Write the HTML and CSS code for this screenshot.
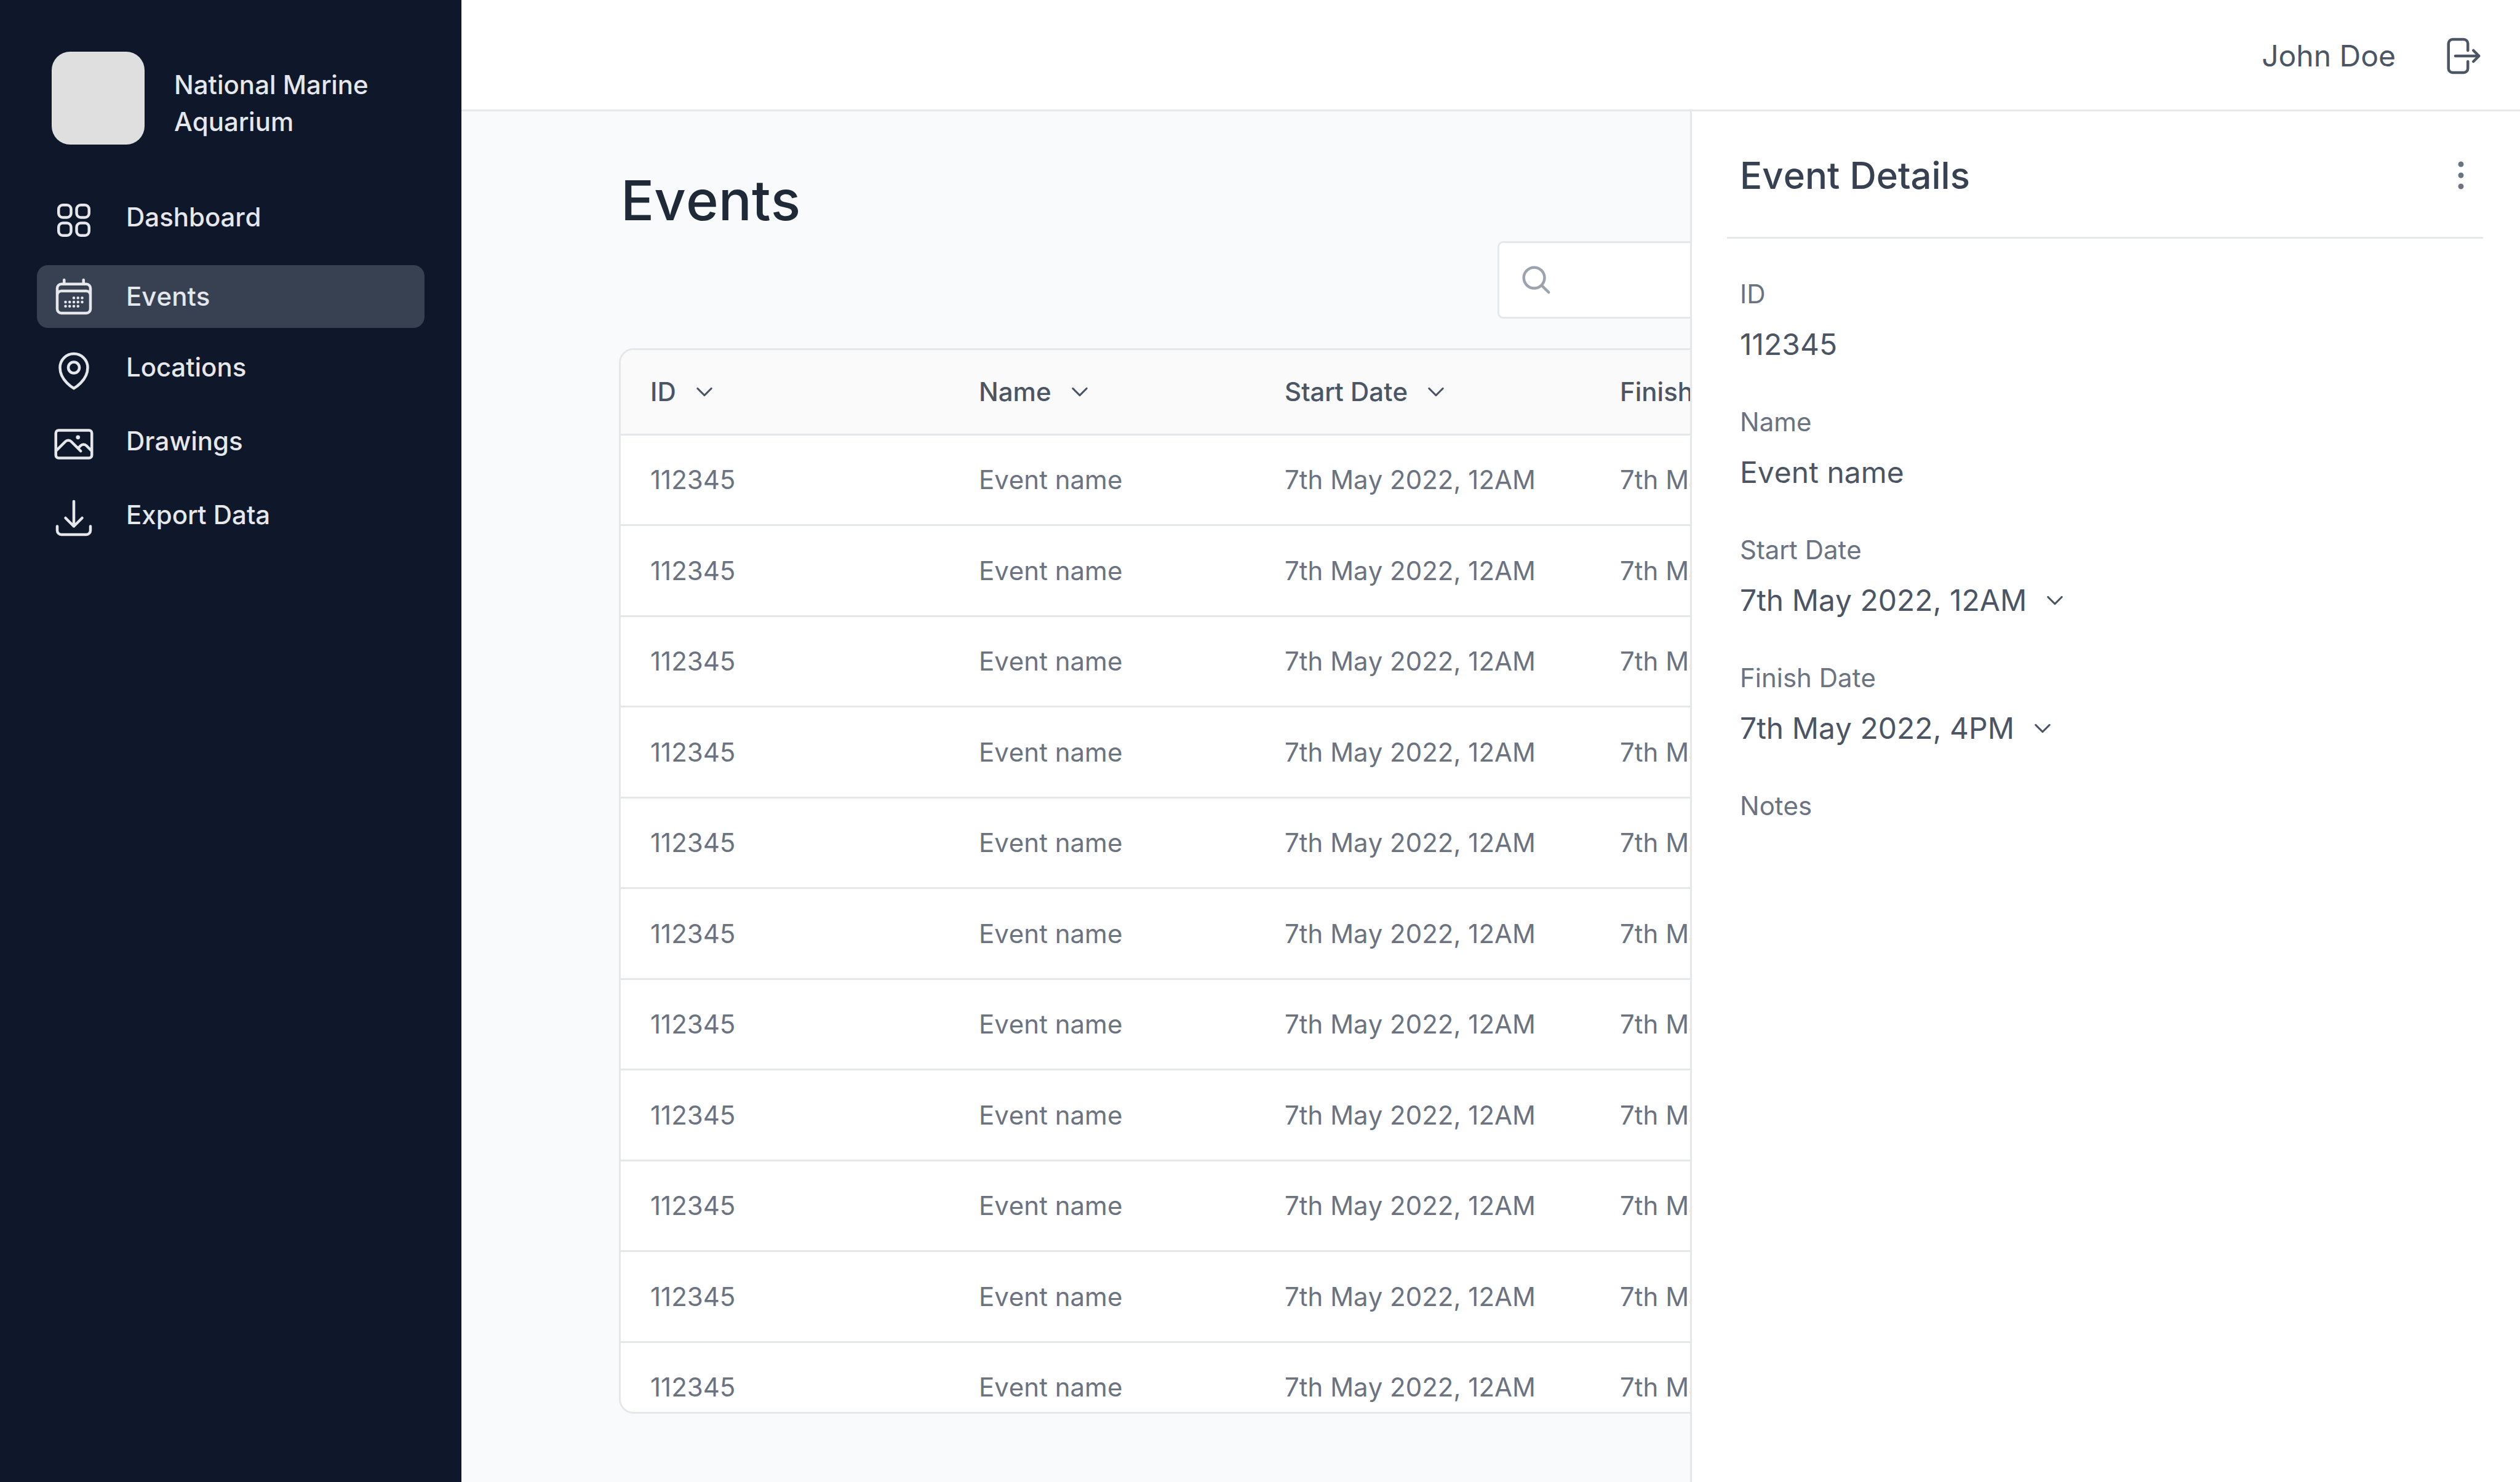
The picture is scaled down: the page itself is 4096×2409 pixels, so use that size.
FILE: index.html
```html
<!DOCTYPE html>
<html lang="en">
<head>
<meta charset="utf-8">
<title>Events – National Marine Aquarium</title>
<link rel="stylesheet" href="styles.css">
</head>
<body>
<svg class="sprite" aria-hidden="true">
  <symbol id="i-grid" viewBox="0 0 24 24"><path d="M3.75 6A2.25 2.25 0 016 3.75h2.25A2.25 2.25 0 0110.5 6v2.25a2.25 2.25 0 01-2.25 2.25H6a2.25 2.25 0 01-2.25-2.25V6zM3.75 15.75A2.25 2.25 0 016 13.5h2.25a2.25 2.25 0 012.25 2.25V18a2.25 2.25 0 01-2.25 2.25H6A2.25 2.25 0 013.75 18v-2.25zM13.5 6a2.25 2.25 0 012.25-2.25H18A2.25 2.25 0 0120.25 6v2.25A2.25 2.25 0 0118 10.5h-2.25a2.25 2.25 0 01-2.25-2.25V6zM13.5 15.75a2.25 2.25 0 012.25-2.25H18a2.25 2.25 0 012.25 2.25V18A2.25 2.25 0 0118 20.25h-2.25A2.25 2.25 0 0113.5 18v-2.25z"/></symbol>
  <symbol id="i-calendar" viewBox="0 0 24 24"><path d="M6.75 3v2.25M17.25 3v2.25M3 18.75V7.5a2.25 2.25 0 012.25-2.25h13.5A2.25 2.25 0 0121 7.5v11.25m-18 0A2.25 2.25 0 005.25 21h13.5A2.25 2.25 0 0021 18.75m-18 0v-7.5A2.25 2.25 0 015.25 9h13.5A2.25 2.25 0 0121 11.25v7.5m-9-6h.008v.008H12v-.008zM12 15h.008v.008H12V15zm0 2.25h.008v.008H12v-.008zM9.75 15h.008v.008H9.75V15zm0 2.25h.008v.008H9.75v-.008zM7.5 15h.008v.008H7.5V15zm0 2.25h.008v.008H7.5v-.008zm6.75-4.5h.008v.008h-.008v-.008zm0 2.25h.008v.008h-.008V15zm0 2.25h.008v.008h-.008v-.008zm2.25-4.5h.008v.008H16.5v-.008zm0 2.25h.008v.008H16.5V15z"/></symbol>
  <symbol id="i-pin" viewBox="0 0 24 24"><path d="M15 10.5a3 3 0 11-6 0 3 3 0 016 0z"/><path d="M19.5 10.5c0 7.142-7.5 11.25-7.5 11.25S4.5 17.642 4.5 10.5a7.5 7.5 0 1115 0z"/></symbol>
  <symbol id="i-photo" viewBox="0 0 24 24"><path d="M2.25 15.75l5.159-5.159a2.25 2.25 0 013.182 0l5.159 5.159m-1.5-1.5l1.409-1.409a2.25 2.25 0 013.182 0l2.909 2.909m-18 3.75h16.5a1.5 1.5 0 001.5-1.5V6a1.5 1.5 0 00-1.5-1.5H3.75A1.5 1.5 0 002.25 6v12a1.5 1.5 0 001.5 1.5zm10.5-11.25h.008v.008h-.008V8.25zm.375 0a.375.375 0 11-.75 0 .375.375 0 01.75 0z"/></symbol>
  <symbol id="i-download" viewBox="0 0 24 24"><path d="M3 16.5v2.25A2.25 2.25 0 005.25 21h13.5A2.25 2.25 0 0021 18.75V16.5M16.5 12L12 16.5m0 0L7.5 12m4.5 4.5V3"/></symbol>
  <symbol id="i-logout" viewBox="0 0 24 24"><path d="M15.75 9V5.25A2.25 2.25 0 0013.5 3h-6a2.25 2.25 0 00-2.25 2.25v13.5A2.25 2.25 0 007.5 21h6a2.25 2.25 0 002.25-2.25V15m3 0l3-3m0 0l-3-3m3 3H9"/></symbol>
  <symbol id="i-search" viewBox="0 0 24 24"><path d="M21 21l-5.197-5.197m0 0A7.5 7.5 0 105.196 5.196a7.5 7.5 0 0010.607 10.607z"/></symbol>
  <symbol id="i-chevron" viewBox="0 0 24 24"><path d="M19.5 8.25l-7.5 7.5-7.5-7.5"/></symbol>
  <symbol id="i-dots" viewBox="0 0 24 24"><path d="M12 6.75a.75.75 0 110-1.5.75.75 0 010 1.5zM12 12.75a.75.75 0 110-1.5.75.75 0 010 1.5zM12 18.75a.75.75 0 110-1.5.75.75 0 010 1.5z"/></symbol>
</svg>

<div class="app">
  <aside class="sidebar">
    <div class="org">
      <div class="org-logo"></div>
      <p class="org-name">National Marine Aquarium</p>
    </div>
    <nav class="nav">
      <a class="nav-item" href="#dashboard"><svg class="icon"><use href="#i-grid"/></svg><span class="nav-label">Dashboard</span></a>
      <a class="nav-item active" href="#events" aria-current="page"><svg class="icon"><use href="#i-calendar"/></svg><span class="nav-label">Events</span></a>
      <a class="nav-item" href="#locations"><svg class="icon"><use href="#i-pin"/></svg><span class="nav-label">Locations</span></a>
      <a class="nav-item" href="#drawings"><svg class="icon"><use href="#i-photo"/></svg><span class="nav-label">Drawings</span></a>
      <a class="nav-item" href="#export"><svg class="icon"><use href="#i-download"/></svg><span class="nav-label">Export Data</span></a>
    </nav>
  </aside>

  <div class="page">
    <header class="topbar">
      <span class="user">John Doe</span>
      <button class="icon-button" type="button" aria-label="Log out"><svg class="icon"><use href="#i-logout"/></svg></button>
    </header>

    <div class="body">
      <main class="content">
        <h1 class="title">Events</h1>
        <label class="search">
          <svg class="icon search-icon"><use href="#i-search"/></svg>
          <input class="search-input" type="search" aria-label="Search events">
        </label>
        <div class="table-wrap">
          <table class="table">
            <colgroup><col class="col-id"><col class="col-name"><col class="col-start"><col class="col-finish"></colgroup>
            <thead>
              <tr>
                <th><button class="sort" type="button">ID<svg class="chevron"><use href="#i-chevron"/></svg></button></th>
                <th><button class="sort" type="button">Name<svg class="chevron"><use href="#i-chevron"/></svg></button></th>
                <th><button class="sort" type="button">Start Date<svg class="chevron"><use href="#i-chevron"/></svg></button></th>
                <th><button class="sort" type="button">Finish Date<svg class="chevron"><use href="#i-chevron"/></svg></button></th>
              </tr>
            </thead>
            <tbody>
              <tr><td>112345</td><td>Event name</td><td>7th May 2022, 12AM</td><td>7th May 2022, 4PM</td></tr>
              <tr><td>112345</td><td>Event name</td><td>7th May 2022, 12AM</td><td>7th May 2022, 4PM</td></tr>
              <tr><td>112345</td><td>Event name</td><td>7th May 2022, 12AM</td><td>7th May 2022, 4PM</td></tr>
              <tr><td>112345</td><td>Event name</td><td>7th May 2022, 12AM</td><td>7th May 2022, 4PM</td></tr>
              <tr><td>112345</td><td>Event name</td><td>7th May 2022, 12AM</td><td>7th May 2022, 4PM</td></tr>
              <tr><td>112345</td><td>Event name</td><td>7th May 2022, 12AM</td><td>7th May 2022, 4PM</td></tr>
              <tr><td>112345</td><td>Event name</td><td>7th May 2022, 12AM</td><td>7th May 2022, 4PM</td></tr>
              <tr><td>112345</td><td>Event name</td><td>7th May 2022, 12AM</td><td>7th May 2022, 4PM</td></tr>
              <tr><td>112345</td><td>Event name</td><td>7th May 2022, 12AM</td><td>7th May 2022, 4PM</td></tr>
              <tr><td>112345</td><td>Event name</td><td>7th May 2022, 12AM</td><td>7th May 2022, 4PM</td></tr>
              <tr><td>112345</td><td>Event name</td><td>7th May 2022, 12AM</td><td>7th May 2022, 4PM</td></tr>
            </tbody>
          </table>
        </div>
      </main>

      <aside class="details">
        <div class="details-head">
          <h2 class="details-title">Event Details</h2>
          <button class="icon-button muted" type="button" aria-label="More actions"><svg class="icon"><use href="#i-dots"/></svg></button>
        </div>
        <dl class="fields">
          <div class="field"><dt>ID</dt><dd>112345</dd></div>
          <div class="field"><dt>Name</dt><dd>Event name</dd></div>
          <div class="field"><dt>Start Date</dt><dd><button class="picker" type="button">7th May 2022, 12AM<svg class="chevron"><use href="#i-chevron"/></svg></button></dd></div>
          <div class="field"><dt>Finish Date</dt><dd><button class="picker" type="button">7th May 2022, 4PM<svg class="chevron"><use href="#i-chevron"/></svg></button></dd></div>
          <div class="field"><dt>Notes</dt><dd></dd></div>
        </dl>
      </aside>
    </div>
  </div>
</div>
</body>
</html>
```
FILE: styles.css
```css
* { box-sizing: border-box; margin: 0; padding: 0; }

body {
  font-family: Inter, "Liberation Sans", sans-serif;
  font-kerning: none;
  font-size: 42px;
  line-height: 60px;
  color: #4b5563;
  background: #f9fafc;
}

button { font: inherit; font-kerning: inherit; color: inherit; background: none; border: 0; cursor: pointer; }
a { color: inherit; text-decoration: none; }

.sprite { display: none; }

.icon, .chevron {
  flex: none;
  display: block;
  fill: none;
  stroke: currentColor;
  stroke-width: 1.5;
  stroke-linecap: round;
  stroke-linejoin: round;
}
.icon { width: 72px; height: 72px; }
.chevron { width: 36px; height: 36px; stroke-width: 2; }

.app { display: flex; height: 100vh; }

/* Sidebar */
.sidebar {
  flex: none;
  width: 750px;
  padding: 84px 60px;
  color: #e5e7eb;
  background: #0f172a;
  font-weight: 500;
}
.org { display: flex; gap: 48px; padding-left: 24px; }
.org-logo {
  flex: none;
  width: 151px;
  height: 151px;
  border-radius: 30px;
  background: #dfdfdf;
}
.org-name { width: 360px; padding-top: 24px; }

.nav { display: flex; flex-direction: column; gap: 18px; padding-top: 72px; }
.nav-item {
  display: flex;
  align-items: center;
  gap: 49px;
  height: 102px;
  padding-left: 24px;
  border-radius: 18px;
}
.nav-label { padding-bottom: 10px; }
.nav-item.active { margin-top: 4px; background: #384152; }
.nav-item.active .nav-label { padding-bottom: 0; }

/* Top bar */
.page { flex: 1; min-width: 0; display: flex; flex-direction: column; }
.topbar {
  flex: none;
  display: flex;
  align-items: center;
  justify-content: flex-end;
  gap: 70px;
  height: 181px;
  padding: 3px 60px 0 0;
  background: #fff;
  border-bottom: 3px solid #e5e7eb;
}
.user { font-size: 48px; }
.muted { color: #6b7280; }

.body { flex: 1; min-height: 0; display: flex; }

/* Events list */
.content {
  flex: 1;
  min-width: 0;
  overflow: hidden;
  display: flex;
  flex-direction: column;
  padding: 91px 0 111px 256px;
}
.title {
  padding-left: 3px;
  font-size: 90px;
  line-height: 108px;
  font-weight: 500;
  color: #1f2937;
}
.search {
  flex: none;
  display: flex;
  align-items: center;
  gap: 24px;
  width: 1200px;
  height: 126px;
  margin: 12px 0 48px 1428px;
  padding: 0 33px;
  background: #fff;
  border: 3px solid #e5e7eb;
  border-radius: 9px;
}
.search-icon { width: 54px; height: 54px; color: #9ca3af; stroke-width: 2; }
.search-input {
  flex: 1;
  min-width: 0;
  font: inherit;
  color: inherit;
  background: none;
  border: 0;
  outline: 0;
}

.table-wrap {
  flex: 1;
  min-height: 0;
  width: 2624px;
  overflow: hidden;
  background: #fff;
  border: 3px solid #e5e7eb;
  border-radius: 24px;
}
.table {
  width: 100%;
  table-layout: fixed;
  border-collapse: separate;
  border-spacing: 0;
  white-space: nowrap;
}
.col-id { width: 534px; }
.col-name { width: 497px; }
.col-start { width: 545px; }
.table th, .table td { padding-left: 48px; text-align: left; border-bottom: 3px solid #e5e7eb; }
.table th { height: 139px; font-weight: 500; background: #fafafa; }
.table td { height: 148px; color: #6b7280; }
.table tr:nth-child(odd) td { height: 147px; }
.sort, .picker { display: flex; align-items: center; gap: 28px; }

/* Event details */
.details {
  flex: none;
  width: 1349px;
  padding: 0 60px 0 57px;
  background: #fff;
  border-left: 3px solid #e5e7eb;
}
.details-head {
  display: flex;
  align-items: center;
  justify-content: space-between;
  height: 207px;
  padding: 4px 0 0 21px;
  border-bottom: 3px solid #e5e7eb;
}
.details-title { font-size: 60px; font-weight: 500; line-height: 72px; color: #374151; }
.fields { display: flex; flex-direction: column; gap: 66px; padding: 60px 21px; }
.field { display: flex; flex-direction: column; gap: 22px; }
.field dt { color: #6b7280; }
.field dd { height: 60px; font-size: 48px; }
```
